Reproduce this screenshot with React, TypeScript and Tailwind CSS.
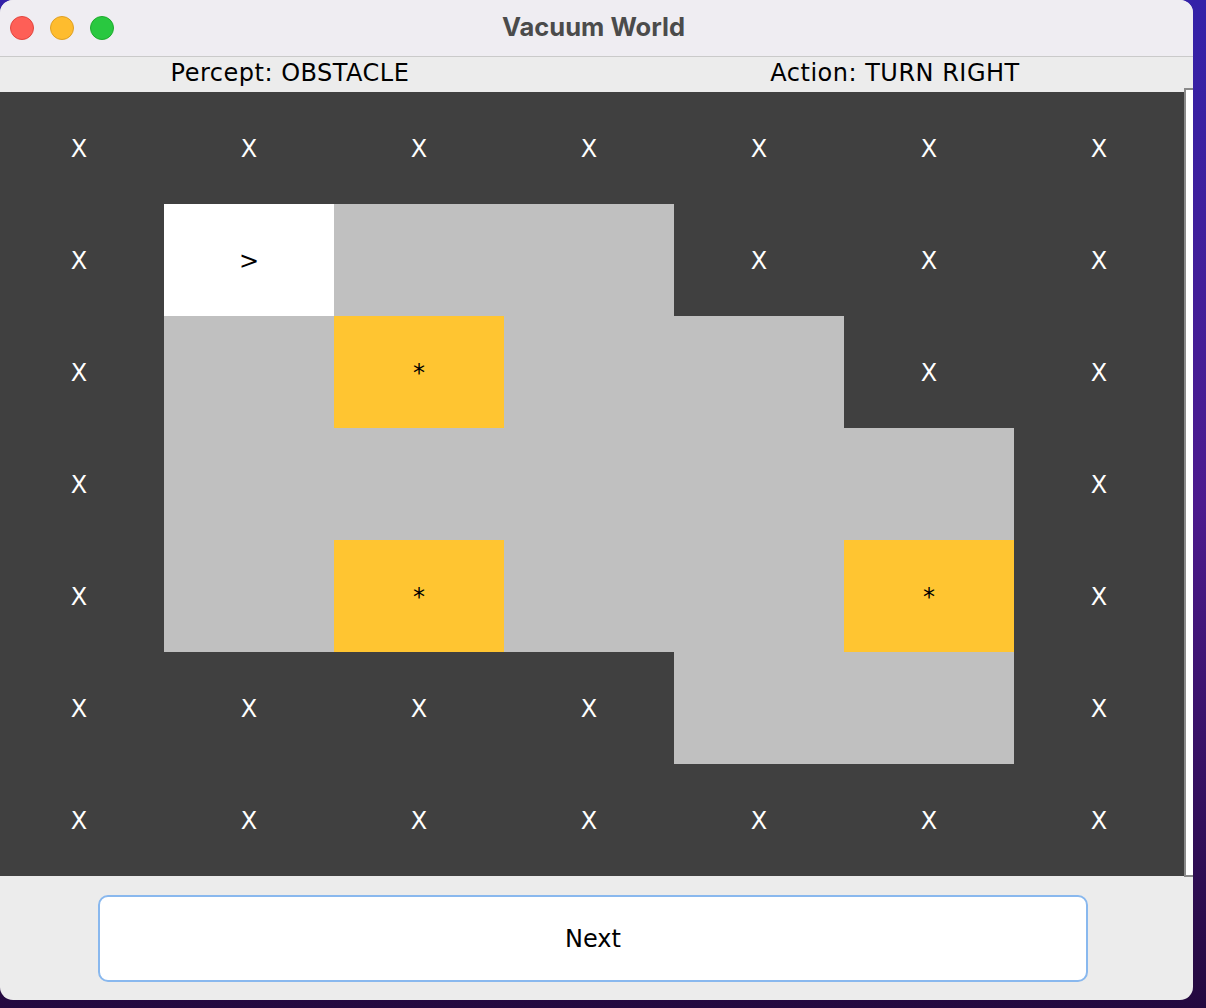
import React from 'react';

type Cell = 'X' | 'G' | 'D' | 'A';

// X = obstacle, G = clean floor, D = dirt, A = agent
const WORLD: Cell[][] = [
  ['X', 'X', 'X', 'X', 'X', 'X', 'X'],
  ['X', 'A', 'G', 'G', 'X', 'X', 'X'],
  ['X', 'G', 'D', 'G', 'G', 'X', 'X'],
  ['X', 'G', 'G', 'G', 'G', 'G', 'X'],
  ['X', 'G', 'D', 'G', 'G', 'D', 'X'],
  ['X', 'X', 'X', 'X', 'G', 'G', 'X'],
  ['X', 'X', 'X', 'X', 'X', 'X', 'X'],
];

const font = { fontFamily: '"DejaVu Sans", "Liberation Sans", sans-serif' };

const cellClass = (c: Cell) => {
  switch (c) {
    case 'X': return 'bg-[#404040] text-white';
    case 'G': return 'bg-[#c0c0c0] text-black';
    case 'D': return 'bg-[#ffc531] text-black';
    case 'A': return 'bg-white text-black';
  }
};

const cellLabel = (c: Cell) => {
  if (c === 'X') return 'X';
  if (c === 'D') return '*';
  if (c === 'A') return '>';
  return '';
};

const App: React.FC = () => {
  return (
    <div className="w-[1206px] h-[1008px] overflow-hidden bg-gradient-to-b from-[#3321a8] via-[#4c1a8e] to-[#24093f]">
      <div className="w-[1193px] h-[1000px] rounded-[13px] overflow-hidden flex flex-col bg-[#ececec]">

        {/* Title bar */}
        <div className="relative h-[57px] shrink-0 bg-[#efedf2] border-b border-[#cacaca] flex items-center justify-center">
          <div className="absolute left-[10px] top-[16px] flex gap-[16px]">
            <span className="w-[24px] h-[24px] rounded-full bg-[#fe5f57] border border-[#e2463f]" />
            <span className="w-[24px] h-[24px] rounded-full bg-[#febc2e] border border-[#dfa024]" />
            <span className="w-[24px] h-[24px] rounded-full bg-[#29c840] border border-[#1eab2d]" />
          </div>
          <span
            className="text-[25.5px] font-bold text-[#4b4b4b] -mt-[2px] mr-[6px]"
            style={{ fontFamily: 'Inter, "Liberation Sans", sans-serif' }}
          >
            Vacuum World
          </span>
        </div>

        {/* Percept / action */}
        <div className="h-[35px] shrink-0 flex text-[24px] text-black leading-none tracking-[0.5px]" style={font}>
          <div className="w-[580px] shrink-0 flex items-center justify-center -mt-[3px]">Percept: OBSTACLE</div>
          <div className="w-[630px] shrink-0 flex items-center justify-center -mt-[3px]">Action: TURN RIGHT</div>
        </div>

        {/* World grid + scrollbar */}
        <div className="h-[784px] shrink-0 flex">
          <div className="-ml-[6px] w-[1190px] shrink-0 grid grid-cols-7 grid-rows-7" style={font}>
            {WORLD.flatMap((row, r) =>
              row.map((c, i) => (
                <div
                  key={`${r}-${i}`}
                  className={`flex items-center justify-center text-[24px] leading-none pt-[1px] ${cellClass(c)}`}
                >
                  {cellLabel(c)}
                </div>
              ))
            )}
          </div>
          <div className="-mt-[4px] h-[789px] w-[9px] shrink-0 bg-white border-l-2 border-b-2 border-t-2 border-[#8a8a8a]" />
        </div>

        {/* Next button */}
        <div className="flex-1 pt-[19px] pl-[98px]">
          <button
            className="w-[990px] h-[87px] rounded-[10px] bg-white border-2 border-[#89b8ee] text-[24px] text-black flex items-center justify-center"
            style={font}
          >
            Next
          </button>
        </div>
      </div>
    </div>
  );
};

export default App;
